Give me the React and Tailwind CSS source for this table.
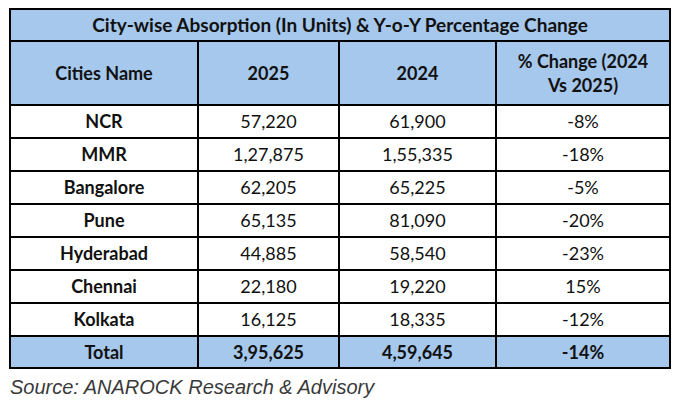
const rows = [
  ["NCR", "57,220", "61,900", "-8%"],
  ["MMR", "1,27,875", "1,55,335", "-18%"],
  ["Bangalore", "62,205", "65,225", "-5%"],
  ["Pune", "65,135", "81,090", "-20%"],
  ["Hyderabad", "44,885", "58,540", "-23%"],
  ["Chennai", "22,180", "19,220", "15%"],
  ["Kolkata", "16,125", "18,335", "-12%"],
];

const cell = "border-2 border-black text-center p-0";

const App = () => {
  return (
    <div className="w-[682px] h-[405px] bg-white pt-[8px] pl-[9px] font-['Lato',sans-serif] text-[18px] text-[#111]">
      <table className="table-fixed border-collapse w-[660px]">
        <colgroup>
          <col className="w-[188px]" />
          <col className="w-[141px]" />
          <col className="w-[157px]" />
          <col className="w-[174px]" />
        </colgroup>
        <thead>
          <tr className="bg-[#a6c8ec] font-bold">
            <td colSpan={4} className={`${cell} h-[32px] text-[19px]`}>
              City-wise Absorption (In Units) &amp; Y-o-Y Percentage Change
            </td>
          </tr>
          <tr className="bg-[#a6c8ec] font-bold">
            <td className={`${cell} h-[64px]`}>Cities Name</td>
            <td className={cell}>2025</td>
            <td className={cell}>2024</td>
            <td className={`${cell} leading-[24px]`}>
              % Change (2024
              <br />
              Vs 2025)
            </td>
          </tr>
        </thead>
        <tbody>
          {rows.map((r) => (
            <tr key={r[0]}>
              <td className={`${cell} h-[33px] font-bold`}>{r[0]}</td>
              <td className={cell}>{r[1]}</td>
              <td className={cell}>{r[2]}</td>
              <td className={cell}>{r[3]}</td>
            </tr>
          ))}
          <tr className="bg-[#a6c8ec] font-bold">
            <td className={`${cell} h-[32px]`}>Total</td>
            <td className={cell}>3,95,625</td>
            <td className={cell}>4,59,645</td>
            <td className={cell}>-14%</td>
          </tr>
        </tbody>
      </table>
      <p className="mt-[6px] pl-[1px] font-['Liberation_Sans',Arial,sans-serif] italic text-[20px] leading-[24px] text-[#3a3a3a]">
        Source: ANAROCK Research &amp; Advisory
      </p>
    </div>
  );
};

export default App;
